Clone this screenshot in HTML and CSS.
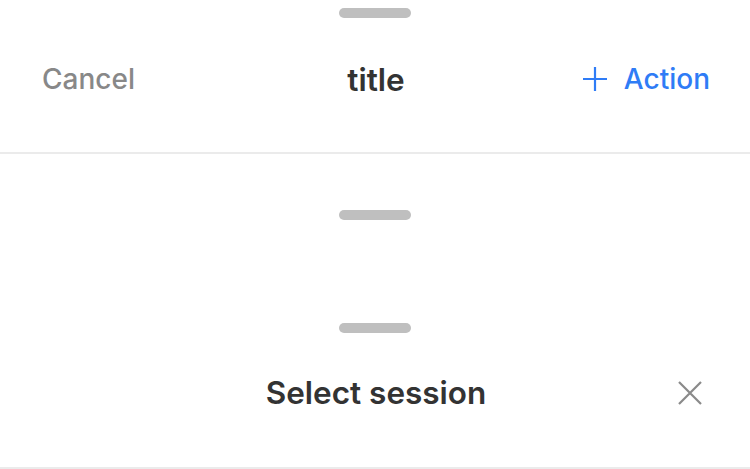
FILE: index.html
```html
<!DOCTYPE html>
<html lang="en">
<head>
    <meta charset="UTF-8">
    <meta name="viewport" content="width=device-width, initial-scale=1.0">
    <title>Sheet headers</title>
    <link rel="stylesheet" href="styles.css">
</head>
<body>
    <div class="sheet sheet-actions">
        <div class="handle"></div>
        <div class="header-row">
            <button class="text-btn cancel-btn">Cancel</button>
            <h2 class="sheet-title">title</h2>
            <button class="text-btn action-btn">
                <svg class="icon-plus" width="26" height="26" viewBox="0 0 26 26">
                    <path d="M13 1v24M1 13h24" stroke="currentColor" stroke-width="2.2" fill="none"/>
                </svg>
                Action
            </button>
        </div>
    </div>

    <div class="sheet sheet-handle">
        <div class="handle"></div>
    </div>

    <div class="sheet sheet-close">
        <div class="handle"></div>
        <div class="header-row">
            <span class="spacer"></span>
            <h2 class="sheet-title">Select session</h2>
            <button class="icon-btn close-btn">
                <svg width="26" height="26" viewBox="0 0 26 26">
                    <path d="M2 2l22 22M24 2L2 24" stroke="currentColor" stroke-width="2.2" fill="none"/>
                </svg>
            </button>
        </div>
    </div>
</body>
</html>
```

FILE: styles.css
```css
body {
    margin: 0;
    background: #ffffff;
    font-family: Inter, "Liberation Sans", Arial, sans-serif;
    color: #333333;
}
.sheet {
    display: flex;
    flex-direction: column;
    align-items: center;
    box-sizing: border-box;
}
.handle {
    flex: none;
    width: 72px;
    height: 10px;
    border-radius: 5px;
    background: #bfbfbf;
}
.sheet-actions {
    padding-top: 8px;
    height: 154px;
    border-bottom: 2px solid #ebebeb;
}
.sheet-handle {
    height: 169px;
    padding-top: 56px;
}
.sheet-close {
    height: 147px;
    border-bottom: 3px solid #ebebeb;
}
.header-row {
    width: 100%;
    box-sizing: border-box;
    flex: 1;
    display: grid;
    grid-template-columns: 1fr auto 1fr;
    align-items: center;
    padding: 0 40px 12px 42px;
}
.sheet-close .header-row {
    padding-bottom: 15px;
}
.sheet-title {
    margin: 0;
    font-size: 31.5px;
    font-weight: 600;
    color: #333333;
}
button {
    background: none;
    border: none;
    padding: 0;
    font-family: inherit;
    cursor: pointer;
}
.text-btn {
    font-size: 28px;
    font-weight: 500;
}
.cancel-btn {
    justify-self: start;
    color: #888888;
}
.action-btn {
    justify-self: end;
    display: flex;
    align-items: center;
    gap: 16px;
    color: #2f7cf6;
}
.close-btn {
    justify-self: end;
    display: flex;
    color: #8a8a8a;
    margin-right: 7px;
}
```
